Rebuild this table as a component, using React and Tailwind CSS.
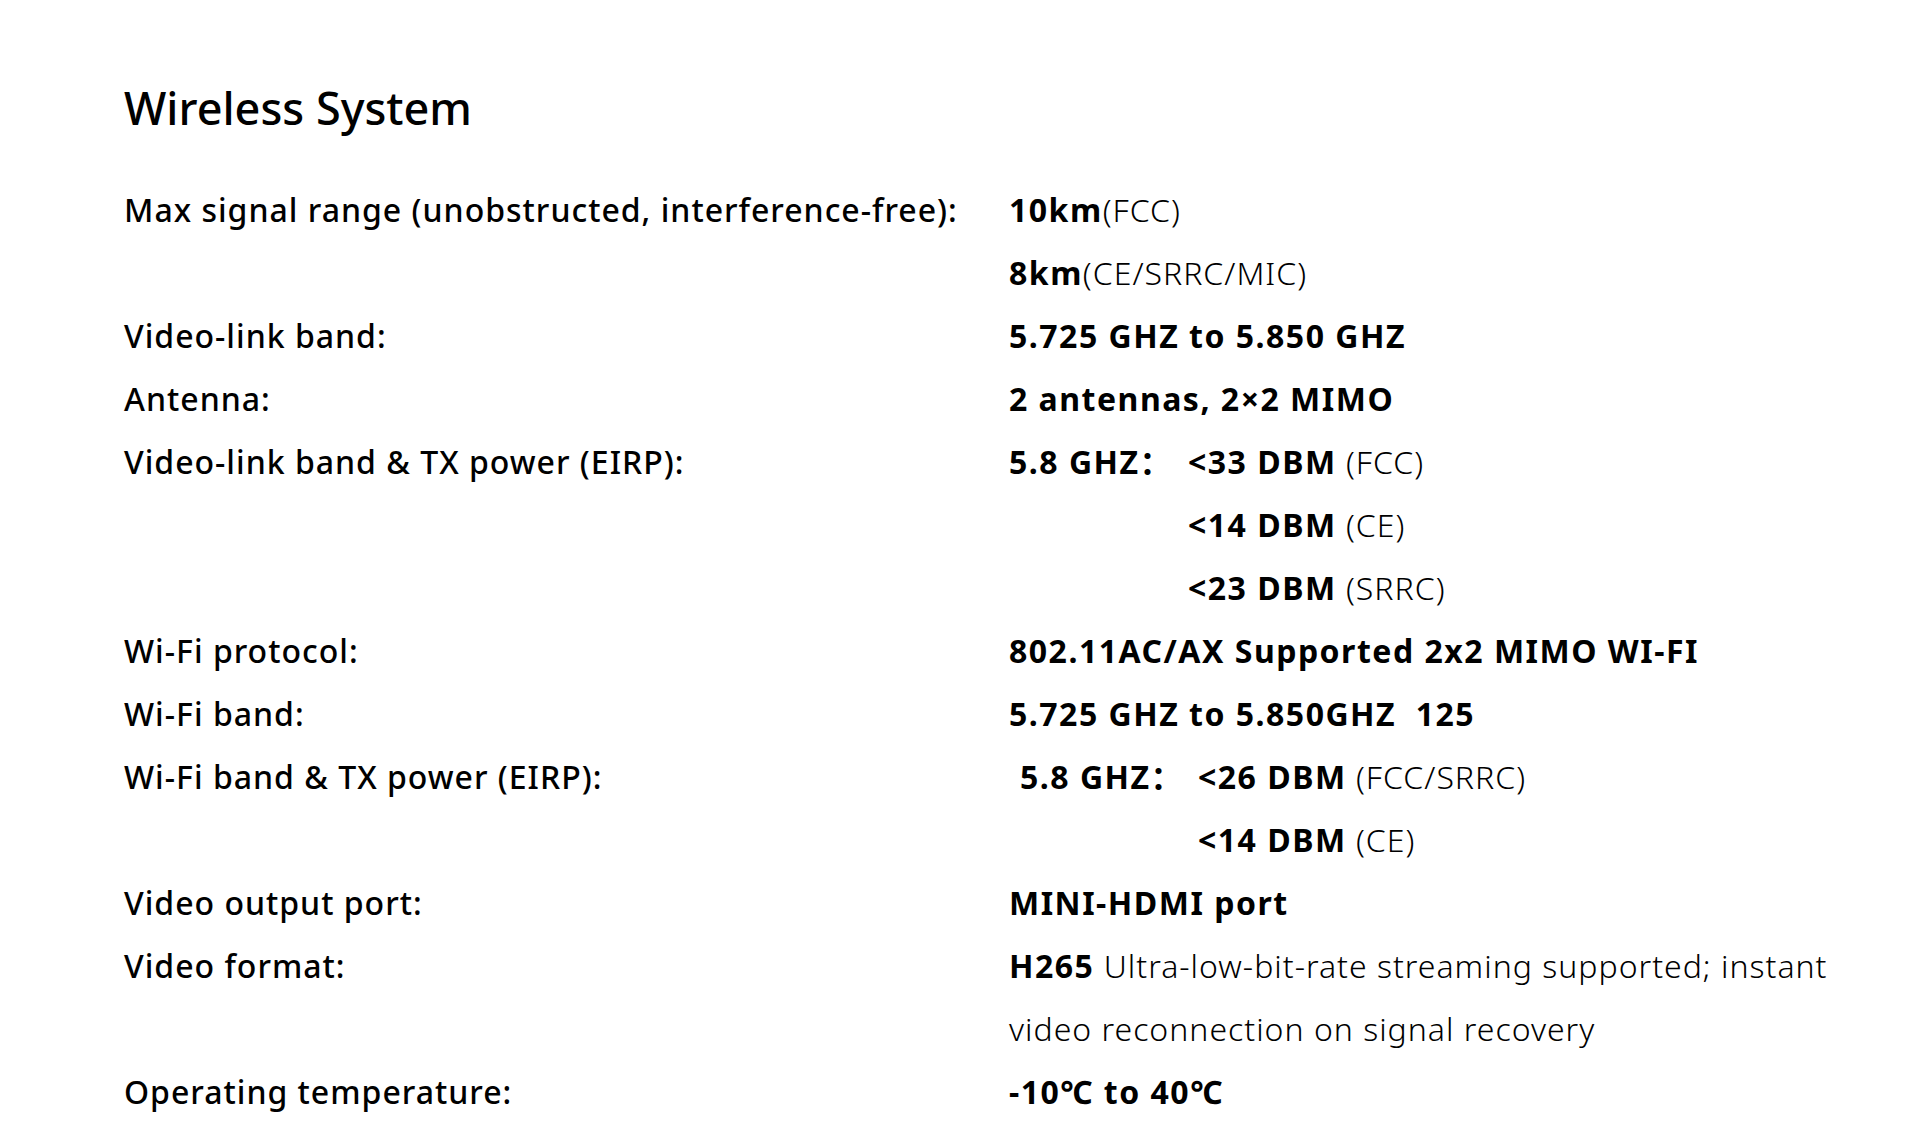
import React from 'react';

// spec rows for the wireless system table
const rows = [
  { label: 'Max signal range (unobstructed, interference-free):', value: <><b className="font-bold tracking-[1.5px]">10km</b><span className="font-light">(FCC)</span></> },
  { label: '', value: <><b className="font-bold tracking-[1.5px]">8km</b><span className="font-light">(CE/SRRC/MIC)</span></> },
  { label: 'Video-link band:', value: <b className="font-bold tracking-[1.5px]">5.725 GHZ to 5.850 GHZ</b> },
  { label: 'Antenna:', value: <b className="font-bold tracking-[1.5px]">2 antennas, 2×2 MIMO</b> },
  { label: 'Video-link band & TX power (EIRP):', prefix: '5.8 GHZ：', pw: 'w-[179px]', value: <><b className="font-bold tracking-[1.5px]">&lt;33 DBM</b> <span className="font-light">(FCC)</span></> },
  { label: '', prefix: '', pw: 'w-[179px]', value: <><b className="font-bold tracking-[1.5px]">&lt;14 DBM</b> <span className="font-light">(CE)</span></> },
  { label: '', prefix: '', pw: 'w-[179px]', value: <><b className="font-bold tracking-[1.5px]">&lt;23 DBM</b> <span className="font-light">(SRRC)</span></> },
  { label: 'Wi-Fi protocol:', value: <b className="font-bold tracking-[1.5px]">802.11AC/AX Supported 2x2 MIMO WI-FI</b> },
  { label: 'Wi-Fi band:', value: <b className="font-bold tracking-[1.5px] whitespace-pre">5.725 GHZ to 5.850GHZ  125</b> },
  { label: 'Wi-Fi band & TX power (EIRP):', prefix: '5.8 GHZ：', pw: 'w-[178px]', indent: true, value: <><b className="font-bold tracking-[1.5px]">&lt;26 DBM</b> <span className="font-light">(FCC/SRRC)</span></> },
  { label: '', prefix: '', pw: 'w-[178px]', indent: true, value: <><b className="font-bold tracking-[1.5px]">&lt;14 DBM</b> <span className="font-light">(CE)</span></> },
  { label: 'Video output port:', value: <b className="font-bold tracking-[1.5px]">MINI-HDMI port</b> },
  { label: 'Video format:', value: <><b className="font-bold tracking-[1.5px]">H265</b> <span className="font-light">Ultra-low-bit-rate streaming supported; instant video reconnection on signal recovery</span></> },
  { label: 'Operating temperature:', value: <b className="font-bold tracking-[1.5px]">-10℃ to 40℃</b> },
];

const App = () => {
  return (
    <div className="w-full min-h-screen bg-white text-black pl-[124px] pr-[20px] pt-[78px] font-['Noto_Sans','Noto_Sans_CJK_SC',sans-serif]">
      <h1 className="text-[45px] font-medium leading-[60px] mb-[40px]">Wireless System</h1>

      <div className="text-[32px] leading-[63px] tracking-[1px]">
        {rows.map((row, i) => (
          <div key={i} className="grid grid-cols-[885px_1fr]">
            <div className="font-medium">{row.label}</div>
            <div className={`flex ${row.indent ? 'pl-[11px]' : ''}`}>
              {row.prefix !== undefined && (
                <span className={`${row.pw} shrink-0 font-bold tracking-[1.5px]`}>{row.prefix}</span>
              )}
              <span className="max-w-[850px]">{row.value}</span>
            </div>
          </div>
        ))}
      </div>
    </div>
  );
};

export default App;
